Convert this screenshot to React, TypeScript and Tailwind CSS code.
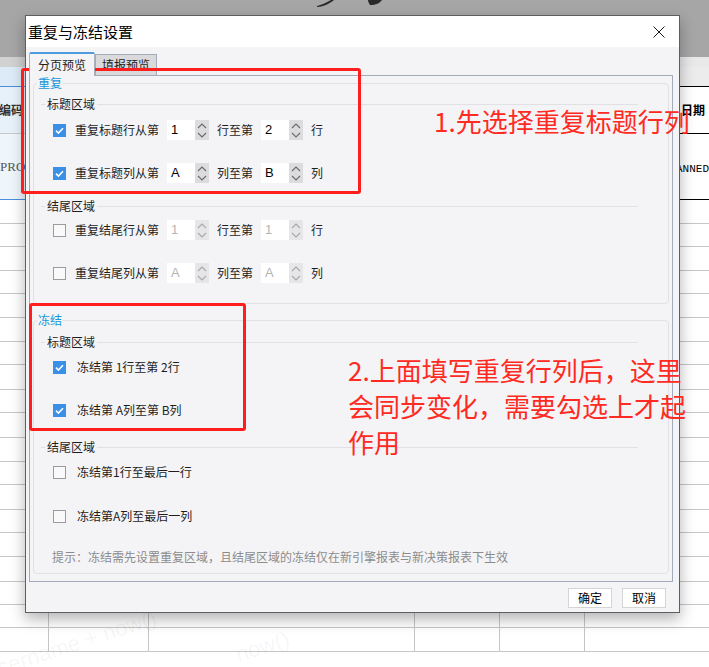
import React from "react";

const gridRows = [24, 23, 24, 23, 24, 24, 23, 25, 23, 25, 24, 23, 25, 23, 24, 25, 23, 23, 24];

function Sheet() {
  return (
    <div className="flex flex-col">
      {/* toolbar */}
      <div className="relative h-[57px] bg-[#a6a6a6]">
        <svg className="absolute left-[314px] top-0" width="72" height="8" viewBox="0 0 72 8">
          <path d="M3 6 C7 5 12 3 17 0 L20 0 C15 4 9 7 3 7 Z" fill="#2a2a2a" />
          <path d="M54 0 L68 0 C66 3 62 5 56 5 C55 3 54 2 54 0 Z" fill="#2a2a2a" />
        </svg>
      </div>
      <div className="flex h-[10px]">
        <div className="w-[354px] bg-[#d2d2d2]" />
        <div className="flex-1 bg-[#e9e9e9]" />
      </div>
      <div className="flex h-[20px]">
        <div className="w-[354px] border-b border-[#4a8fd8] bg-[#dcebf7]" />
        <div className="flex-1 border-b border-black bg-[#ececec]" />
      </div>
      {/* header row */}
      <div className="flex h-[47px]">
        <div className="w-[354px] border-b border-[#c9c9c9] bg-[#e6f1fa]">
          <div className="flex h-full w-[25px] items-center justify-end overflow-hidden pr-[2px]">
            <span className="shrink-0 whitespace-nowrap text-[12px] font-bold text-[#333]">编码</span>
          </div>
        </div>
        <div className="flex flex-1 items-center justify-end border-b border-black bg-white pr-[4px]">
          <span className="text-[12px] font-bold text-black">日期</span>
        </div>
      </div>
      {/* data row */}
      <div className="flex h-[66px]">
        <div className="w-[354px] border-b border-[#4a8fd8] bg-[#eef5fb] pt-[18px]">
          <span className="font-['Liberation_Serif',serif] text-[13px] text-[#555]">PRODUCT</span>
        </div>
        <div className="flex-1 border-b border-black bg-white pl-[326px] pt-[19px]">
          <span className="font-['Liberation_Mono',monospace] text-[11px] text-black">ANNED</span>
        </div>
      </div>
      {gridRows.map((h, i) => (
        <div
          key={i}
          className={`flex border-b border-[#c6c6c6] ${h === 23 ? "h-[23px]" : h === 24 ? "h-[24px]" : "h-[25px]"}`}
        >
          <div className="w-[49px] border-r border-[#c6c6c6]" />
          <div className="w-[100px] border-r border-[#c6c6c6]" />
          <div className="w-[266px] border-r border-[#c6c6c6]" />
          <div className="w-[85px] border-r border-[#c6c6c6]" />
          <div className="w-[85px] border-r border-[#c6c6c6]" />
          <div className="flex-1" />
        </div>
      ))}
    </div>
  );
}

function Watermarks() {
  return (
    <>
      <span className="absolute left-[-18px] top-[628px] -rotate-[18deg] font-['Liberation_Sans',sans-serif] text-[22px] text-black/[0.05]">
        username + now()
      </span>
      <span className="absolute left-[235px] top-[630px] -rotate-[18deg] font-['Liberation_Sans',sans-serif] text-[22px] text-black/[0.05]">
        now()
      </span>
    </>
  );
}

function Checkbox({ checked }: { checked: boolean }) {
  if (checked) {
    return (
      <div className="flex h-[13px] w-[13px] shrink-0 items-center justify-center bg-[#3a8fe6]">
        <svg width="13" height="13" viewBox="0 0 13 13">
          <path d="M3 6.6 L5.4 9 L10 4.2" fill="none" stroke="white" strokeWidth="1.6" />
        </svg>
      </div>
    );
  }
  return <div className="h-[13px] w-[13px] shrink-0 border border-[#9b9b9b] bg-[#f9f9f9]" />;
}

function Spinner({ value, disabled }: { value: string; disabled?: boolean }) {
  const chevron = disabled ? "#a8a8a8" : "#6a6a6a";
  return (
    <div className="flex h-[20px] w-[42px] shrink-0">
      <div
        className={`flex flex-1 items-center bg-white pl-[4px] font-['Liberation_Sans',sans-serif] text-[13px] ${
          disabled ? "text-[#b4b4b4]" : "text-black"
        }`}
      >
        {value}
      </div>
      <div className={`flex w-[14px] flex-col items-center justify-center gap-[3px] ${disabled ? "bg-[#e6e6e8]" : "bg-[#dcdcde]"}`}>
        <svg width="10" height="6" viewBox="0 0 10 6">
          <path d="M1 5 L5 1 L9 5" fill="none" stroke={chevron} strokeWidth="1.1" />
        </svg>
        <svg width="10" height="6" viewBox="0 0 10 6">
          <path d="M1 1 L5 5 L9 1" fill="none" stroke={chevron} strokeWidth="1.1" />
        </svg>
      </div>
    </div>
  );
}

function SubHeader({ label }: { label: string }) {
  return (
    <div className="ml-[7px] flex h-[16px] w-[597px] items-center">
      <div className="h-px w-[4px] bg-[#e1e1e5]" />
      <span className="px-[2px] text-[12px] leading-[16px] text-[#1e1e1e]">{label}</span>
      <div className="h-px flex-1 bg-[#e1e1e5]" />
    </div>
  );
}

function RangeRow({
  checked,
  label,
  from,
  mid,
  to,
  unit,
  disabled,
  className,
}: {
  checked: boolean;
  label: string;
  from: string;
  mid: string;
  to: string;
  unit: string;
  disabled?: boolean;
  className: string;
}) {
  return (
    <div className={`ml-[19px] flex h-[20px] items-center text-[12px] text-[#1e1e1e] ${className}`}>
      <Checkbox checked={checked} />
      <span className="ml-[9px] w-[84px] whitespace-nowrap">{label}</span>
      <div className="ml-[8px]">
        <Spinner value={from} disabled={disabled} />
      </div>
      <span className="ml-[8px] w-[36px] whitespace-nowrap">{mid}</span>
      <div className="ml-[8px]">
        <Spinner value={to} disabled={disabled} />
      </div>
      <span className="ml-[8px]">{unit}</span>
    </div>
  );
}

function FreezeRow({ checked, children, className }: { checked: boolean; children: React.ReactNode; className: string }) {
  return (
    <div className={`ml-[19px] flex h-[20px] items-center text-[12px] text-[#1e1e1e] ${className}`}>
      <Checkbox checked={checked} />
      <span className="ml-[11px] whitespace-nowrap">{children}</span>
    </div>
  );
}

function Dialog() {
  return (
    <div className="absolute left-[25px] top-[15px] flex h-[598px] w-[655px] flex-col border border-[#5e5e5e] bg-[#f4f4f6] shadow-[0_6px_14px_rgba(0,0,0,0.3)]">
      {/* title bar */}
      <div className="flex h-[31px] items-center justify-between bg-white pl-[2px] pr-[14px]">
        <span className="text-[15px] leading-none text-black">重复与冻结设置</span>
        <svg width="12" height="12" viewBox="0 0 12 12">
          <path d="M0.5 0.5 L11.5 11.5 M11.5 0.5 L0.5 11.5" stroke="#1a1a1a" strokeWidth="1" />
        </svg>
      </div>

      {/* tabs */}
      <div className="ml-[3px] mt-[5px] flex h-[23px] items-end">
        <div className="relative z-10 -mb-px flex h-[24px] w-[66px] items-center justify-center rounded-t-[2px] border-x border-t-2 border-x-[#a9b1bf] border-t-[#4f9be0] bg-[#f4f4f6] text-[12px] text-[#1e1e1e]">
          分页预览
        </div>
        <div className="flex h-[21px] w-[62px] items-center justify-center border border-b-0 border-[#a4acba] bg-[#dadadd] text-[12px] text-[#1e1e1e]">
          填报预览
        </div>
      </div>

      {/* panel */}
      <div className="ml-[3px] h-[507px] w-[644px] border border-[#a3abbb] px-[3px] pb-[7px]">
        <fieldset className="rounded-[4px] border border-[#e1e1e5] pb-[20px]">
          <legend className="ml-[3px] px-px text-[12px] leading-[14px] text-[#1796d8]">重复</legend>
          <div className="mt-[6px]">
            <SubHeader label="标题区域" />
          </div>
          <RangeRow className="mt-[8px]" checked label="重复标题行从第" from="1" mid="行至第" to="2" unit="行" />
          <RangeRow className="mt-[23px]" checked label="重复标题列从第" from="A" mid="列至第" to="B" unit="列" />
          <div className="mt-[15px]">
            <SubHeader label="结尾区域" />
          </div>
          <RangeRow className="mt-[6px]" checked={false} disabled label="重复结尾行从第" from="1" mid="行至第" to="1" unit="行" />
          <RangeRow className="mt-[23px]" checked={false} disabled label="重复结尾列从第" from="A" mid="列至第" to="A" unit="列" />
        </fieldset>

        <fieldset className="mt-[9px] rounded-[4px] border border-[#e1e1e5] pb-[8px]">
          <legend className="ml-[3px] px-px text-[12px] leading-[14px] text-[#1796d8]">冻结</legend>
          <div className="mt-[7px]">
            <SubHeader label="标题区域" />
          </div>
          <FreezeRow className="mt-[7px]" checked>
            冻结第 1行至第 2行
          </FreezeRow>
          <FreezeRow className="mt-[23px]" checked>
            冻结第 A列至第 B列
          </FreezeRow>
          <div className="mt-[19px]">
            <SubHeader label="结尾区域" />
          </div>
          <FreezeRow className="mt-[7px]" checked={false}>
            冻结第1行至最后一行
          </FreezeRow>
          <FreezeRow className="mt-[24px]" checked={false}>
            冻结第A列至最后一列
          </FreezeRow>
          <div className="ml-[18px] mt-[23px] h-[16px] whitespace-nowrap text-[12px] leading-[16px] text-[#8c8c8c]">
            提示：冻结需先设置重复区域，且结尾区域的冻结仅在新引擎报表与新决策报表下生效
          </div>
        </fieldset>
      </div>

      {/* buttons */}
      <div className="mt-[6px] flex justify-end gap-[10px] pr-[13px]">
        <button className="flex h-[20px] w-[44px] items-center justify-center border border-[#d4d4d4] bg-white text-[12px] text-black">
          确定
        </button>
        <button className="flex h-[20px] w-[44px] items-center justify-center border border-[#d4d4d4] bg-white text-[12px] text-black">
          取消
        </button>
      </div>
    </div>
  );
}

function Annotations() {
  return (
    <>
      <div className="absolute left-[21px] top-[68px] h-[126px] w-[340px] rounded-[3px] border-[3px] border-[#ff1e1e]" />
      <div className="absolute left-[29px] top-[303px] h-[128px] w-[217px] rounded-[3px] border-[3px] border-[#ff1e1e]" />
      <div className="absolute left-[434px] top-[103px] whitespace-nowrap text-[26px] leading-[36px] text-[#ff2a22]">
        1.先选择重复标题行列
      </div>
      <div className="absolute left-[348px] top-[352px] whitespace-nowrap text-[26px] leading-[36px] text-[#ff2a22]">
        <div>2.上面填写重复行列后，这里</div>
        <div>会同步变化，需要勾选上才起</div>
        <div>作用</div>
      </div>
    </>
  );
}

export default function App() {
  return (
    <div className="relative h-[667px] w-[709px] overflow-hidden bg-white font-['Noto_Sans_CJK_SC',sans-serif]">
      <Sheet />
      <Watermarks />
      <Dialog />
      <Annotations />
    </div>
  );
}
